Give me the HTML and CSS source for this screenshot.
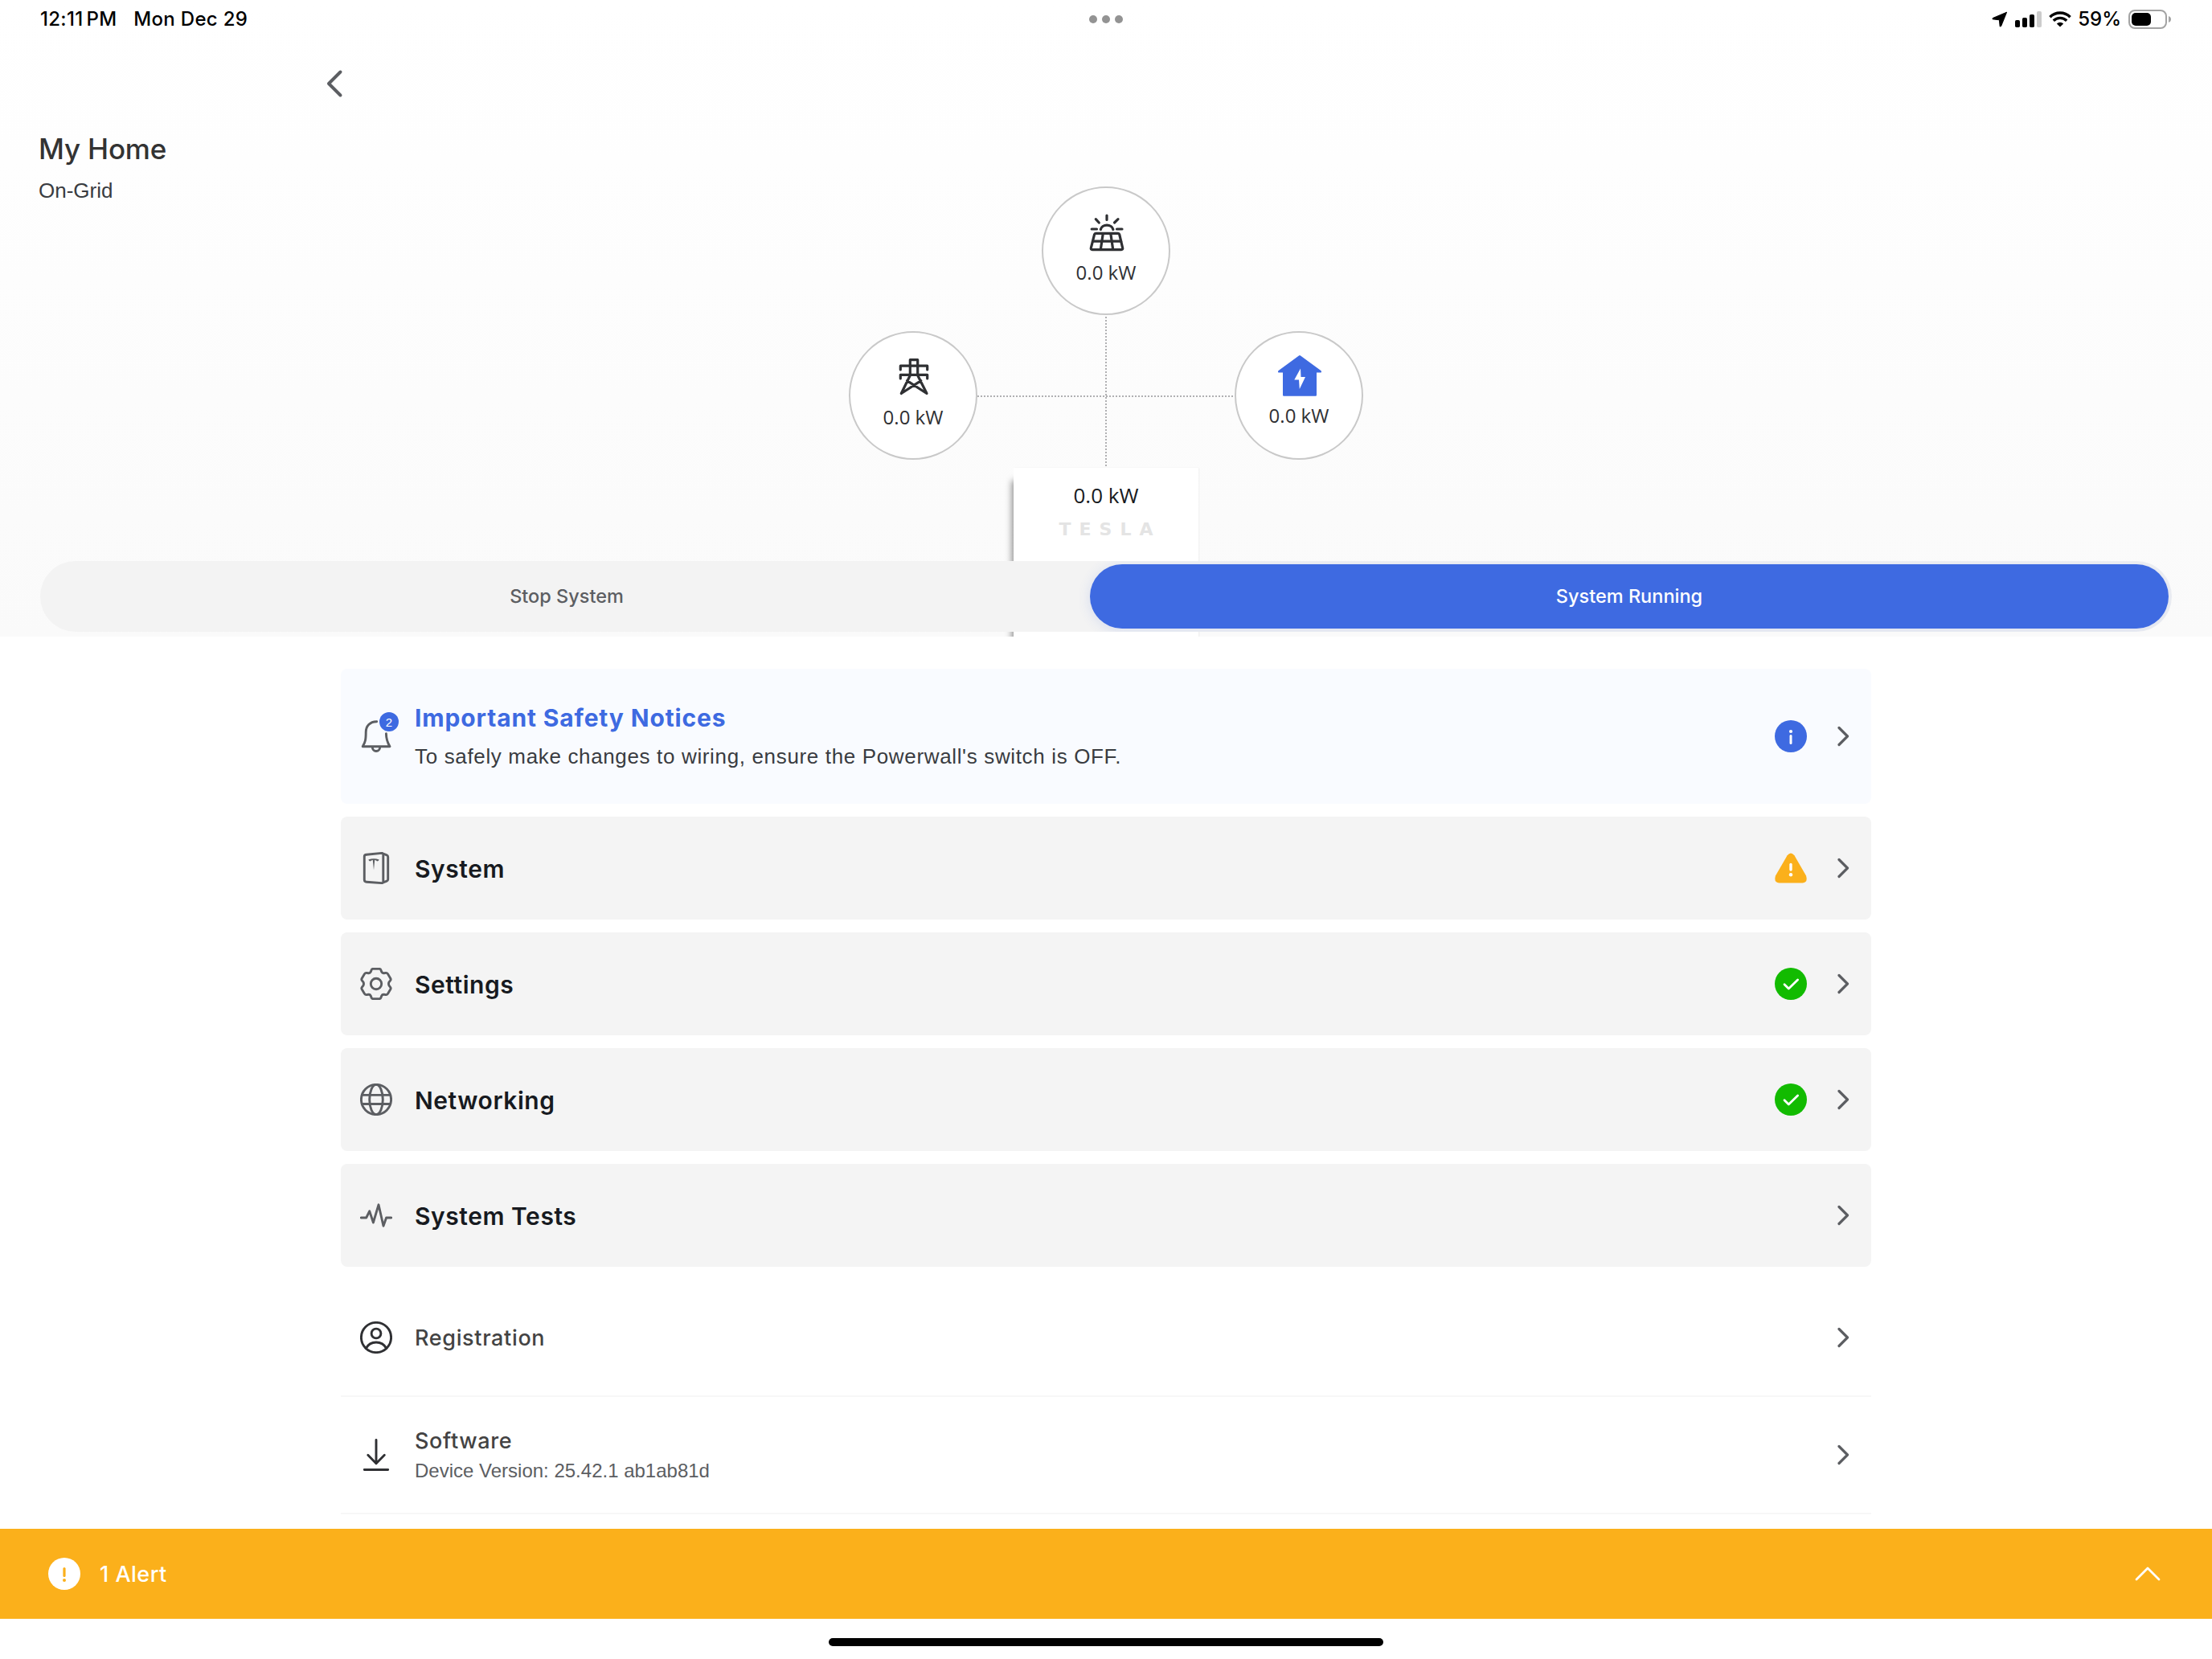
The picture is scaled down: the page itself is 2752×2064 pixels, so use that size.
FILE: index.html
```html
<!DOCTYPE html>
<html lang="en">
<head>
    <meta charset="UTF-8">
    <meta name="viewport" content="width=device-width, initial-scale=1.0">
    <title>My Home</title>
    <link rel="stylesheet" href="styles.css">
</head>
<body>
    <div class="hero">
        <div class="status-bar">
            <div class="status-left">
                <span class="status-time">12:11<span class="meridiem">PM</span></span>
                <span class="status-date">Mon Dec 29</span>
            </div>
            <div class="dots"><i></i><i></i><i></i></div>
            <div class="status-right">
                <svg class="location" width="20" height="20" viewBox="0 0 20 20"><path d="M18.6 1.2 11.6 18.6 10.2 19 9.4 10.8 1 9.8 1.2 8.6Z" fill="#000" stroke="#000" stroke-linejoin="round"/></svg>
                <svg class="signal" width="34" height="20" viewBox="0 0 34 20">
                    <rect x="0" y="11" width="6" height="9" rx="1.8"/>
                    <rect x="9" y="8" width="6" height="12" rx="1.8"/>
                    <rect x="18" y="4" width="6" height="16" rx="1.8"/>
                    <rect x="27" y="0" width="6" height="20" rx="1.8" fill="#ccc"/>
                </svg>
                <svg class="wifi" width="28" height="20" viewBox="0 0 28 20" fill="none" stroke="#000" stroke-width="3.4">
                    <path d="M1.4 7.2a18 18 0 0 1 25.2 0"/>
                    <path d="M5.8 11.8a11.6 11.6 0 0 1 16.4 0"/>
                    <path d="M14 19.6 9.8 15.4a6 6 0 0 1 8.4 0Z" fill="#000" stroke="none"/>
                </svg>
                <span class="percent">59%</span>
                <svg class="battery" width="54" height="24" viewBox="0 0 54 24">
                    <rect x="1" y="1" width="46" height="22" rx="7" fill="none" stroke="#a3a3a3" stroke-width="2"/>
                    <rect x="4" y="4" width="24" height="16" rx="5"/>
                    <path d="M50 8q3 1.200 3 4t-3 4Z" fill="#a3a3a3"/>
                </svg>
            </div>
        </div>

        <div class="nav">
            <svg class="back" width="24" height="36" viewBox="0 0 24 36"><path d="M19.500 3.500 5 18l14.500 14.500"/></svg>
        </div>

        <h1>My Home</h1>
        <p class="grid-state">On-Grid</p>

        <!-- power flow diagram -->
        <div class="flow">
            <svg class="wires" width="320" height="192" viewBox="0 0 320 192">
                <path d="M160 2V192M0 101H320"/>
            </svg>
            <div class="node solar">
                <svg width="44" height="48" viewBox="0 0 44 48">
                    <path d="M22 3v5.500M8.300 7.700l4 4.300M36 7.700l-4.500 4.300M3.200 20h6.300M34.500 20H41M14.300 20.500a8 6.800 0 0 1 15.600 0"/>
                    <path d="M8.300 25.300H36q1.400 0 1.700 1.300l4 17q.4 2-1.600 2H3.900q-2 0-1.600-2l4.300-17q.3-1.300 1.700-1.300Z"/>
                    <path d="M4.500 35.200h35.200M17.300 25.500l-3 20M26.800 25.500l2.900 20" stroke-width="1.800"/>
                </svg>
                <span>0.0 kW</span>
            </div>
            <div class="node grid">
                <svg width="40" height="48" viewBox="0 0 40 48">
                    <path d="M4.300 44.500 15.300 22V2.700h9.400V22L36 44.500 11.500 28.700M4.300 44.500l24.500-15.800M3.300 15V10.200H36.700V15M3.300 26V21.300H36.700V26"/>
                </svg>
                <span>0.0 kW</span>
            </div>
            <div class="node home">
                <svg width="56" height="52" viewBox="0 0 56 52">
                    <path class="house" d="M27 1.400q1-.7 2 0L54.600 20.300q.9 1.100 0 2.300H49V50.500q0 1.200-1.200 1.200H8.200Q7 51.700 7 50.500V22.600H1.400q-.9-1.200 0-2.300Z"/>
                    <path class="bolt" d="M29 17.500 21.300 31.500H27l.8 11.500L35 28h-5.500Z"/>
                </svg>
                <span>0.0 kW</span>
            </div>
            <div class="powerwall">
                <span>0.0 kW</span>
                <b>TESLA</b>
            </div>
        </div>

        <div class="switch">
            <div class="option">Stop System</div>
            <div class="option active">System Running</div>
        </div>
    </div>

    <div class="list">
        <div class="card notice">
            <div class="icon">
                <svg width="40" height="40" viewBox="0 0 40 40"><path d="M20.700 1.700C12 1.700 7.200 7.500 7.200 15c0 9-.7 12.500-4 17.700H37c-3-5-4.500-8.700-4.600-16M15.300 33.500a4.700 5 0 0 0 9.400 0"/></svg>
                <span class="badge">2</span>
            </div>
            <div class="text">
                <h2>Important Safety Notices</h2>
                <p>To safely make changes to wiring, ensure the Powerwall's switch is OFF.</p>
            </div>
            <svg class="state" width="40" height="40" viewBox="0 0 40 40"><circle cx="20" cy="20" r="20" fill="#3e6ae1"/><circle cx="20" cy="14" r="2.100" fill="#fff"/><path d="M20 19.500v9" stroke-width="3"/></svg>
            <svg class="chevron" width="16" height="28" viewBox="0 0 16 28"><path d="M3 3.500 13.500 14 3 24.500"/></svg>
        </div>

        <div class="card">
            <div class="icon">
                <svg width="40" height="40" viewBox="0 0 40 40">
                    <path d="M8 3.200 27 1.400q1.800-.1 1.800 1.600V37q0 1.700-1.800 1.600L8 37.200Q5.300 37 5.300 34.500v-29Q5.300 3.400 8 3.200ZM27.500 1.500l5.700 2.300q1.500.7 1.500 2.200v28q0 1.500-1.500 2.200l-5.700 2.300"/>
                    <path d="M10.300 9.500q6.700-2.600 13.400 0-.6 1.900-2.600 2-.8-1.300-2.900-1.400L17 22.500 15.800 10.100q-2.100.1-2.900 1.400-2-.1-2.600-2Z" fill="#5c5e62" stroke="none"/>
                </svg>
            </div>
            <div class="text"><h2>System</h2></div>
            <svg class="state" width="40" height="40" viewBox="0 0 40 40"><path d="M15.600 4.200q4.400-5.400 8.800 0L39 29.500q2.500 8.800-4.500 8.900h-29Q-1.500 38.300 1 29.500Z" fill="#fbb01b" stroke="none"/><path d="M20 15.500v6.500" stroke-width="3.400"/><circle cx="20" cy="28.300" r="2.200" fill="#fff"/></svg>
            <svg class="chevron" width="16" height="28" viewBox="0 0 16 28"><path d="M3 3.500 13.500 14 3 24.500"/></svg>
        </div>

        <div class="card">
            <div class="icon">
                <svg width="40" height="40" viewBox="0 0 40 40">
                    <circle cx="20" cy="20" r="6.700"/>
                    <path d="M16 1.400H24Q25.500 1.400 26 3L26.800 5.200Q27.600 7 29.600 6.800L32 6.400Q33.600 6.200 34.400 7.600L37.800 13.200Q38.600 14.600 37.600 15.900L36.200 17.600Q34.800 20 36.200 22.400L37.600 24.100Q38.600 25.400 37.800 26.800L34.400 32.400Q33.600 33.800 32 33.600L29.600 33.200Q27.600 33 26.800 34.800L26 37Q25.500 38.600 24 38.600H16Q14.500 38.600 14 37L13.200 34.800Q12.400 33 10.400 33.200L8 33.600Q6.400 33.800 5.600 32.400L2.200 26.800Q1.400 25.400 2.400 24.100L3.800 22.400Q5.200 20 3.800 17.600L2.400 15.900Q1.400 14.600 2.200 13.200L5.600 7.600Q6.400 6.200 8 6.400L10.400 6.800Q12.400 7 13.200 5.200L14 3Q14.500 1.400 16 1.400Z"/>
                </svg>
            </div>
            <div class="text"><h2>Settings</h2></div>
            <svg class="state" width="40" height="40" viewBox="0 0 40 40"><circle cx="20" cy="20" r="20" fill="#12bb00"/><path d="M12 20.700 17.300 26 28.600 15"/></svg>
            <svg class="chevron" width="16" height="28" viewBox="0 0 16 28"><path d="M3 3.500 13.500 14 3 24.500"/></svg>
        </div>

        <div class="card">
            <div class="icon">
                <svg width="40" height="40" viewBox="0 0 40 40"><circle cx="20" cy="20" r="18.600"/><ellipse cx="20" cy="20" rx="8.300" ry="18.600"/><path d="M2.500 14.400h35M2.500 25.500h35"/></svg>
            </div>
            <div class="text"><h2>Networking</h2></div>
            <svg class="state" width="40" height="40" viewBox="0 0 40 40"><circle cx="20" cy="20" r="20" fill="#12bb00"/><path d="M12 20.700 17.300 26 28.600 15"/></svg>
            <svg class="chevron" width="16" height="28" viewBox="0 0 16 28"><path d="M3 3.500 13.500 14 3 24.500"/></svg>
        </div>

        <div class="card">
            <div class="icon">
                <svg width="40" height="40" viewBox="0 0 40 40"><path d="M1.300 23h6.400l4-8.200 4.700 14.200L23 6.800l6 26.500L32.600 23h6.100"/></svg>
            </div>
            <div class="text"><h2>System Tests</h2></div>
            <svg class="chevron" width="16" height="28" viewBox="0 0 16 28"><path d="M3 3.500 13.500 14 3 24.500"/></svg>
        </div>

        <div class="row">
            <div class="icon">
                <svg width="40" height="40" viewBox="0 0 40 40"><circle cx="20" cy="20" r="18.600"/><circle cx="20" cy="15" r="5.900"/><path d="M7.300 33.500C10 28.500 14.500 26 20 26s10 2.500 12.700 7.500"/></svg>
            </div>
            <div class="text"><h3>Registration</h3></div>
            <svg class="chevron" width="16" height="28" viewBox="0 0 16 28"><path d="M3 3.500 13.500 14 3 24.500"/></svg>
        </div>

        <div class="row">
            <div class="icon">
                <svg width="40" height="40" viewBox="0 0 40 40"><path d="M20 1.500V30.500M9.800 20.300 20 30.700 30.300 20.300M5.300 38.500H34.700"/></svg>
            </div>
            <div class="text">
                <h3>Software</h3>
                <p>Device Version: 25.42.1 ab1ab81d</p>
            </div>
            <svg class="chevron" width="16" height="28" viewBox="0 0 16 28"><path d="M3 3.500 13.500 14 3 24.500"/></svg>
        </div>
    </div>

    <div class="alert-bar">
        <svg width="40" height="40" viewBox="0 0 40 40"><circle cx="20" cy="20" r="20" fill="#fff"/><path d="M20 13.500v9" stroke="#fbb01b" stroke-width="3.200" stroke-linecap="round"/><circle cx="20" cy="28" r="2" fill="#fbb01b"/></svg>
        <span>1 Alert</span>
        <svg class="expand" width="32" height="20" viewBox="0 0 32 20"><path d="M2 17 16 3l14 14"/></svg>
    </div>

    <div class="home-indicator"></div>
</body>
</html>
```
FILE: styles.css
```css
* {
    box-sizing: border-box;
}

body {
    margin: 0;
    height: 2064px;
    display: flex;
    flex-direction: column;
    background: #fff;
    color: #171a20;
    font-family: Inter, 'Liberation Sans', sans-serif;
    overflow: hidden;
}

h1, h2, h3, p {
    margin: 0;
}

svg {
    display: block;
    flex: none;
}

/* Hero */
.hero {
    position: relative;
    display: flex;
    flex-direction: column;
    height: 792px;
    padding-bottom: 6px;
    background: linear-gradient(#fff 0, #fefefe 200px, #fafafa 100%);
    overflow: hidden;
}

.status-bar {
    display: grid;
    grid-template-columns: 1fr auto 1fr;
    align-items: center;
    height: 48px;
    padding: 0 50px;
    color: #000;
    font-size: 24px;
    font-weight: 500;
    line-height: 48px;
}

.status-left {
    display: flex;
    gap: 21px;
    letter-spacing: 0.3px;
}

.meridiem {
    margin-left: 4px;
}

.dots {
    display: flex;
    gap: 6px;
}

.dots i {
    width: 10px;
    height: 10px;
    border-radius: 50%;
    background: #939393;
}

.status-right {
    display: flex;
    align-items: center;
    justify-content: flex-end;
}

.signal {
    margin-left: 9px;
}

.wifi {
    margin-left: 8px;
}

.percent {
    margin: 0 9px 0 8px;
}

.nav {
    display: flex;
    align-items: center;
    height: 112px;
    padding-left: 404px;
}

.back path {
    fill: none;
    stroke: #5c5e62;
    stroke-width: 4;
    stroke-linecap: round;
    stroke-linejoin: round;
}

h1 {
    margin: 3px 0 0 48px;
    color: #333;
    font-size: 35px;
    font-weight: 500;
    line-height: 44px;
    letter-spacing: -0.2px;
}

.grid-state {
    margin: 14px 0 0 48px;
    color: #393c41;
    font: 26px/32px 'Liberation Sans', sans-serif;
}

.flow span {
    font: 24px/32px 'Open Sans', 'Noto Sans', sans-serif;
    color: #2f3033;
}

.wires {
    position: absolute;
    left: 1216px;
    top: 392px;
}

.wires path {
    fill: none;
    stroke: #b0b0b2;
    stroke-width: 2;
    stroke-dasharray: 2 2;
}

.node {
    position: absolute;
    display: flex;
    flex-direction: column;
    align-items: center;
    gap: 10px;
    width: 160px;
    height: 160px;
    padding-top: 31px;
    border: 2px solid #c9c9c9;
    border-radius: 50%;
    background: #fff;
}

.node path {
    fill: none;
    stroke: #2f3033;
    stroke-width: 3.2;
    stroke-linecap: round;
    stroke-linejoin: round;
}

.solar {
    left: 1296px;
    top: 232px;
}

.solar svg {
    margin-left: 2px;
}

.grid {
    left: 1056px;
    top: 412px;
}

.grid svg {
    margin-left: 2px;
}

.home {
    left: 1536px;
    top: 412px;
    padding-top: 27px;
    gap: 8px;
}

.home svg {
    margin-left: 2px;
}

.home .house {
    fill: #3e6ae1;
    stroke: none;
}

.home .bolt {
    fill: #fff;
    stroke: none;
}

.powerwall {
    position: absolute;
    left: 1261px;
    top: 582px;
    width: 230px;
    height: 320px;
    padding-top: 16px;
    background: #fff;
    box-shadow: -6px 12px 8px -4px rgba(0, 0, 0, 0.45), 1px 0 2px rgba(0, 0, 0, 0.05);
    text-align: center;
}

.powerwall span {
    display: block;
    color: #171a20;
    font-size: 26px;
    line-height: 36px;
}

.powerwall b {
    display: block;
    margin: 11px -10px 0 0;
    color: #e4e4e4;
    font: bold 22px/28px 'DejaVu Sans', sans-serif;
    letter-spacing: 10px;
}

.switch {
    position: relative;
    display: flex;
    height: 88px;
    margin: auto 50px 0 50px;
    padding: 4px;
    border-radius: 44px;
    background: #f3f3f3;
    overflow: hidden;
}

.option {
    display: flex;
    align-items: center;
    justify-content: center;
    width: 1302px;
    padding-bottom: 1px;
    border-radius: 40px;
    color: #5c5e62;
    font-size: 23.5px;
    font-weight: 500;
}

.option.active {
    flex: 1;
    background: #3e6ae1;
    box-shadow: 0 2px 16px rgba(62, 106, 225, 0.16);
    color: #fff;
}

/* Menu */
.list {
    display: flex;
    flex-direction: column;
    gap: 16px;
    width: 1904px;
    margin: 40px auto 0;
}

.card, .row {
    display: flex;
    align-items: center;
    flex: none;
    height: 128px;
    padding: 0 27px 0 24px;
}

.card {
    border-radius: 8px;
    background: #f4f4f4;
}

.notice {
    height: 168px;
    background: #f9fbff;
}

.row {
    height: 146px;
    border-bottom: 2px solid #f7f7f7;
}

.row + .row {
    margin-top: -16px;
}

.icon {
    position: relative;
    margin-right: 28px;
}

.icon svg, .chevron {
    fill: none;
    stroke: #5c5e62;
    stroke-width: 2.9;
    stroke-linecap: round;
    stroke-linejoin: round;
}

.row .icon svg {
    stroke: #2f3033;
}

.badge {
    position: absolute;
    left: 24px;
    top: -10px;
    width: 24px;
    height: 24px;
    border-radius: 50%;
    background: #3e6ae1;
    color: #fff;
    font: 15px/25px 'Liberation Sans', sans-serif;
    text-align: center;
}

.text {
    flex: 1;
}

h2 {
    padding-top: 1px;
    font-size: 30px;
    font-weight: 600;
    line-height: 40px;
    letter-spacing: 0.55px;
}

h3 {
    padding-top: 1px;
    color: #434343;
    font-size: 27px;
    font-weight: 500;
    line-height: 36px;
    letter-spacing: 0.65px;
}

.notice h2 {
    padding-top: 0;
    color: #3e6ae1;
    font-weight: 700;
    letter-spacing: 0.85px;
}

.notice p {
    margin-top: 10px;
    color: #393c41;
    font: 26px/36px 'Liberation Sans', sans-serif;
    letter-spacing: 0.65px;
}

.row p {
    margin-top: 2px;
    color: #5c5e62;
    font: 24px/34px 'Liberation Sans', sans-serif;
}

.state {
    margin-right: 37px;
    fill: none;
    stroke: #fff;
    stroke-width: 2.8;
    stroke-linecap: round;
    stroke-linejoin: round;
}

.state circle {
    stroke: none;
}

.chevron {
    stroke-width: 3.2;
}

/* Footer */
.alert-bar {
    display: flex;
    align-items: center;
    flex: none;
    height: 112px;
    margin-top: 18px;
    padding: 0 64px 0 60px;
    background: #fbb01b;
    color: #fff;
    font-size: 27px;
    font-weight: 500;
    letter-spacing: 0.5px;
}

.alert-bar span {
    margin-left: 24px;
}

.expand {
    margin-left: auto;
    fill: none;
    stroke: #fff;
    stroke-width: 2.8;
    stroke-linecap: round;
    stroke-linejoin: round;
}

.home-indicator {
    width: 690px;
    height: 10px;
    margin: 24px auto 0;
    border-radius: 5px;
    background: #000;
}
```
